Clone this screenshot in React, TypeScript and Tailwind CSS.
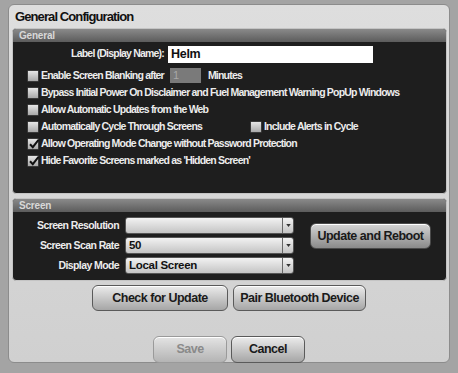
import React from 'react';

const font = { fontFamily: '"Liberation Sans", Arial, sans-serif' };

function Check({ checked = false }: { checked?: boolean }) {
  return (
    <span className="relative inline-flex h-[12px] w-[12px] shrink-0 items-center justify-center rounded-[1px] border border-[#3a3a3a] bg-gradient-to-b from-[#e6e6e6] to-[#a9a9a9]">
      {checked && (
        <svg viewBox="0 0 12 12" className="absolute -top-[1px] left-[0px] h-[12px] w-[12px]">
          <path d="M2 6.2 L4.8 9.2 L10.5 1.8" fill="none" stroke="#111" strokeWidth="2" />
        </svg>
      )}
    </span>
  );
}

function CheckRow({ label, checked }: { label: string; checked?: boolean }) {
  return (
    <div className="flex h-[17px] items-center gap-[2px]">
      <Check checked={checked} />
      <span>{label}</span>
    </div>
  );
}

function Select({ value }: { value?: string }) {
  return (
    <div className="flex h-[17px] w-[169px] items-stretch overflow-hidden rounded-[3px] border border-[#555] bg-gradient-to-b from-[#f2f2f2] to-[#c4c4c4] text-[#111]">
      <span className="flex flex-1 items-center pl-[3px] text-[11.5px] tracking-[-0.3px]">{value}</span>
      <span className="flex w-[11px] items-center justify-center border-l border-[#666]">
        <svg viewBox="0 0 6 4" className="h-[3px] w-[5px]">
          <path d="M0 0 L6 0 L3 4 Z" fill="#333" />
        </svg>
      </span>
    </div>
  );
}

function Button({
  children,
  w,
  h = 26,
  disabled,
  dark,
}: {
  children: React.ReactNode;
  w: string;
  h?: number;
  disabled?: boolean;
  dark?: boolean;
}) {
  const tone = dark
    ? 'from-[#d6d6d6] to-[#8a8a8a] border-[#4a4a4a] text-[#1a1a1a]'
    : disabled
      ? 'from-[#e4e4e4] to-[#b4b4b4] border-[#9a9a9a] text-[#8a8a8a]'
      : 'from-[#ececec] to-[#a6a6a6] border-[#5a5a5a] text-[#1a1a1a]';
  return (
    <button
      className={`${w} ${tone} flex items-center justify-center rounded-[6px] border bg-gradient-to-b text-[12.5px] font-bold tracking-[-0.5px] shadow-[inset_0_1px_0_#fff]`}
      style={{ height: h }}
    >
      {children}
    </button>
  );
}

function PanelHeader({ title }: { title: string }) {
  return (
    <div className="flex h-[13px] items-center rounded-t-[3px] bg-gradient-to-b from-[#8a8a8a] to-[#5c5c5c] pl-[6px] text-[10px] font-bold tracking-[-0.2px] text-[#d8d8d8]">
      {title}
    </div>
  );
}

export default function App() {
  return (
    <div className="h-[373px] w-[458px] overflow-hidden bg-[#a4a4a4] pl-[8px] pt-[4px]" style={font}>
      <div className="flex h-[359px] w-[442px] flex-col rounded-[6px] border border-[#8c8c8c] bg-gradient-to-b from-[#dedede] to-[#d0d0d0]">
        <div className="flex h-[23px] shrink-0 items-center pl-[6px] text-[13px] font-bold tracking-[-0.9px] text-[#111]">
          General Configuration
        </div>

        {/* General */}
        <div className="ml-[3px] w-[435px] shrink-0 rounded-[4px] border border-[#c4c4c4] bg-[#1e1e1e]">
          <PanelHeader title="General" />
          <div className="h-[151px] pl-[14px] pt-[3px] text-[10.5px] font-bold tracking-[-0.8px] text-[#ececec]">
            <div className="flex h-[18px] items-center">
              <span className="w-[137px] text-right">Label (Display Name):</span>
              <div className="ml-[4px] flex h-[17px] w-[205px] items-center bg-white pl-[3px] text-[12.5px] font-bold tracking-[-0.3px] text-[#111]">
                Helm
              </div>
            </div>
            <div className="mt-[4px]">
              <div className="flex h-[17px] items-center gap-[2px]">
                <Check />
                <span>Enable Screen Blanking after</span>
                <span className="ml-[4px] flex h-[15px] w-[31px] items-center bg-[#7a7a7a] pl-[3px] text-[11px] font-normal text-[#a8a8a8]">
                  1
                </span>
                <span className="ml-[5px]">Minutes</span>
              </div>
              <CheckRow label="Bypass Initial Power On Disclaimer and Fuel Management Warning PopUp Windows" />
              <CheckRow label="Allow Automatic Updates from the Web" />
              <div className="flex h-[17px] items-center">
                <div className="flex w-[223px] items-center gap-[2px]">
                  <Check />
                  <span>Automatically Cycle Through Screens</span>
                </div>
                <div className="flex items-center gap-[2px]">
                  <Check />
                  <span>Include Alerts in Cycle</span>
                </div>
              </div>
              <CheckRow label="Allow Operating Mode Change without Password Protection" checked />
              <CheckRow label="Hide Favorite Screens marked as 'Hidden Screen'" checked />
            </div>
          </div>
        </div>

        {/* Screen */}
        <div className="ml-[3px] mt-[4px] w-[435px] shrink-0 rounded-[4px] border border-[#c4c4c4] bg-[#1e1e1e]">
          <PanelHeader title="Screen" />
          <div className="flex h-[68px] items-start pl-[6px] text-[10.5px] font-bold tracking-[-0.6px] text-[#ececec]">
            <div className="mt-[5px] flex flex-col gap-[3px]">
              {[
                ['Screen Resolution', ''],
                ['Screen Scan Rate', '50'],
                ['Display Mode', 'Local Screen'],
              ].map(([l, v]) => (
                <div key={l} className="flex items-center">
                  <span className="w-[100px] text-right">{l}</span>
                  <span className="ml-[6px]">
                    <Select value={v} />
                  </span>
                </div>
              ))}
            </div>
            <div className="ml-[16px] mt-[11px]">
              <Button w="w-[121px]" dark>
                <span className="text-[12.5px] tracking-[-0.5px]">Update and Reboot</span>
              </Button>
            </div>
          </div>
        </div>

        <div className="mt-[4px] flex justify-center gap-[5px]">
          <Button w="w-[136px]">Check for Update</Button>
          <Button w="w-[133px]">Pair Bluetooth Device</Button>
        </div>
        <div className="mt-[25px] flex justify-center gap-[4px]">
          <Button w="w-[74px]" h={27} disabled>
            Save
          </Button>
          <Button w="w-[74px]" h={27}>
            Cancel
          </Button>
        </div>
      </div>
    </div>
  );
}
